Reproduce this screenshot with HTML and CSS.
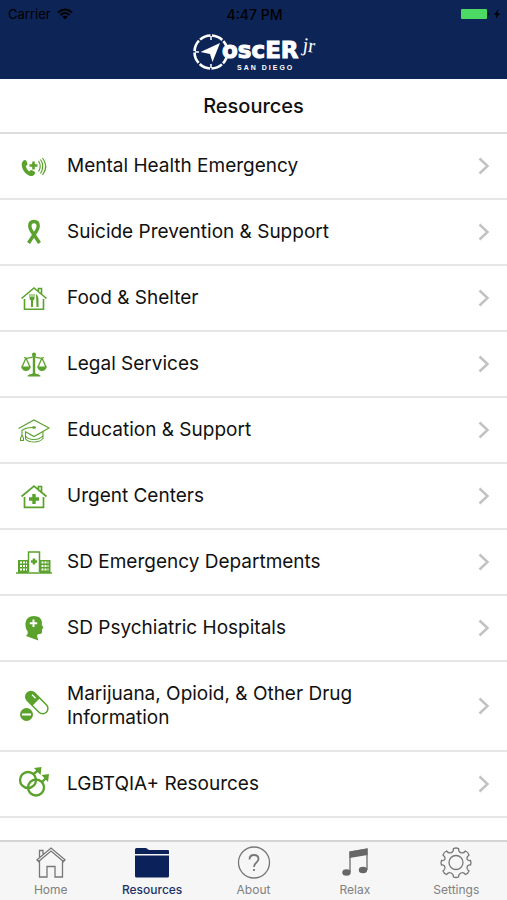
FILE: index.html
```html
<!DOCTYPE html>
<html lang="en">
<head>
  <meta charset="UTF-8">
  <meta name="viewport" content="width=device-width, initial-scale=1">
  <title>Resources</title>
  <link rel="stylesheet" href="styles.css">
</head>
<body>
  <header class="header">
    <div class="status">
      <div class="status-left">
        <span>Carrier</span>
        <svg width="16" height="12" viewBox="0 0 16 12" fill="none" stroke="#000" stroke-width="2">
          <path d="M1 4.500Q8-1.500 15 4.500M3.500 7Q8 3 12.500 7"/>
          <path d="M8 11.500L5.300 8.800Q8 6.800 10.700 8.800Z" fill="#000" stroke="none"/>
        </svg>
      </div>
      <span class="time">4:47 PM</span>
      <div class="status-right">
        <svg width="40" height="12" viewBox="0 0 40 12">
          <rect x="0" y="1" width="26" height="10" rx="1" fill="#4cd964"/>
          <path d="M27.500 4.300Q29.500 6 27.500 7.700Z"/>
          <path d="M37.500 1L33 6.700H35.700L34.700 11L39 5.200H36.300Z"/>
        </svg>
      </div>
    </div>
    <svg class="logo" width="128" height="40" viewBox="0 0 128 40" role="img" aria-label="oscER jr San Diego">
      <circle cx="21" cy="20" r="16.500" fill="none" stroke="#fff" stroke-width="2.600" stroke-dasharray="11.460 1.500" stroke-dashoffset="-1" pathLength="103.680"/>
      <path d="M21 4V8M21 32V36M5 20H9" stroke="#fff" stroke-width="1.500"/>
      <circle cx="39" cy="20" r="6" fill="#0d2456"/>
      <path d="M30 11L22.500 30L20 22L10.500 20Z" fill="#fff"/>
      <text x="32" y="26" class="logo-name">oscER</text>
      <text x="112" y="19" class="logo-jr" transform="rotate(8 112 19)">jr</text>
      <text x="47" y="38" class="logo-city">SAN DIEGO</text>
    </svg>
  </header>

  <h1>Resources</h1>

  <main>
    <ul class="list">
      <li><a href="#">
        <svg class="icon" viewBox="0 0 36 36">
          <path class="solid" d="M7.500 12.500Q9.500 11.500 10.500 13L11.500 16Q11.500 17 9.700 18.300Q10.500 21.500 13.200 23.500Q14.500 21.800 15.500 22L18.500 23.500Q19.700 24.500 18.500 26.500Q16.500 29 13 27.500Q8.500 25.500 6.500 20.500Q4.500 15 7.500 12.500Z"/>
          <path d="M17.500 13.500V21.500M13.500 17.500H21.500" stroke-width="2.600"/>
          <path d="M22.500 13Q26 18 22.500 23.500M24.500 11.500Q29 18 24.500 25.500M26.500 10Q33 18.500 26.500 27" stroke-width="1.200"/>
        </svg>
        <span>Mental Health Emergency</span>
        <svg class="arrow" viewBox="0 0 12 18"><path d="M1.500 1.500L9.500 9L1.500 16.500"/></svg>
      </a></li>
      <li><a href="#">
        <svg class="icon" viewBox="0 0 36 36">
          <path d="M13.800 12Q13.800 7.500 18 7.500Q22.200 7.500 22.200 12Q22.200 15 18.500 20L12.500 29M13.800 12Q13.800 15 17.500 20L23.500 29" stroke-width="3.400"/>
        </svg>
        <span>Suicide Prevention &amp; Support</span>
        <svg class="arrow" viewBox="0 0 12 18"><path d="M1.500 1.500L9.500 9L1.500 16.500"/></svg>
      </a></li>
      <li><a href="#">
        <svg class="icon" viewBox="0 0 36 36">
          <path d="M5.500 18.500L18 8L30.500 18.500M22.500 11V8.500H25.500V14M8.500 19V29.300H27.500V19" stroke-width="1.600"/>
          <path class="solid" d="M13.500 14H14.500V17H15.500V14H16.500V17H17.500V14H18.500V18Q18.500 20 17 20.500V27H15V20.500Q13.500 20 13.500 18ZM20 14Q22.500 15.500 22.500 20.500V27H20.500Z"/>
        </svg>
        <span>Food &amp; Shelter</span>
        <svg class="arrow" viewBox="0 0 12 18"><path d="M1.500 1.500L9.500 9L1.500 16.500"/></svg>
      </a></li>
      <li><a href="#">
        <svg class="icon" viewBox="0 0 36 36">
          <path d="M18 8V27" stroke-width="2.400"/>
          <circle class="solid" cx="18" cy="8.500" r="2"/>
          <path d="M8 11.500Q13 13 18 10.500Q23 13 28 11.500M10 12L6 21M10 12L14 21M26 12L22 21M26 12L30 21" stroke-width="1.300"/>
          <path class="solid" d="M5 20.500H15Q13.500 25 10 25Q6.500 25 5 20.500ZM21 20.500H31Q29.500 25 26 25Q22.500 25 21 20.500ZM11.500 30.500Q11.500 28.500 15.500 28L18 26.500L20.500 28Q24.500 28.500 24.500 30.500Z"/>
        </svg>
        <span>Legal Services</span>
        <svg class="arrow" viewBox="0 0 12 18"><path d="M1.500 1.500L9.500 9L1.500 16.500"/></svg>
      </a></li>
      <li><a href="#">
        <svg class="icon" viewBox="0 0 36 36">
          <path d="M2.500 16.500L18 8L33 16L18 24.500L9 19.500M18 15.500Q10 15 6 18.500V23M9.500 20V27Q12 30 18 30Q24 30 27 26.500V20M9.500 24Q12 27.500 18 27.500Q24 27.500 27 23.500M6 23Q4 26 4.500 28.500H7.500Q8 26 6 23" stroke-width="1.100"/>
          <ellipse class="solid" cx="18" cy="15.500" rx="2" ry="1.300"/>
        </svg>
        <span>Education &amp; Support</span>
        <svg class="arrow" viewBox="0 0 12 18"><path d="M1.500 1.500L9.500 9L1.500 16.500"/></svg>
      </a></li>
      <li><a href="#">
        <svg class="icon" viewBox="0 0 36 36">
          <path d="M5.500 18.500L18 8L30.500 18.500M22.500 11V8.500H25.500V14M8.500 19V29.300H27.500V19" stroke-width="1.700"/>
          <path d="M18 16V26M13 21H23" stroke-width="3.400"/>
        </svg>
        <span>Urgent Centers</span>
        <svg class="arrow" viewBox="0 0 12 18"><path d="M1.500 1.500L9.500 9L1.500 16.500"/></svg>
      </a></li>
      <li><a href="#">
        <svg class="icon" viewBox="0 0 36 36">
          <path d="M12.500 28V8H23.500V28" stroke-width="1.500"/>
          <path d="M0 29H36" stroke-width="1.300"/>
          <path class="solid" d="M2 16H12V29H2ZM24 16H34.500V29H24Z"/>
          <path d="M18 14.500V20.500M15 17.500H21" stroke-width="2.600"/>
          <path class="windows" d="M4 18.500H11M4 22H11M4 25.500H11M25.500 18.500H32.500M25.500 22H32.500M25.500 25.500H32.500"/>
        </svg>
        <span>SD Emergency Departments</span>
        <svg class="arrow" viewBox="0 0 12 18"><path d="M1.500 1.500L9.500 9L1.500 16.500"/></svg>
      </a></li>
      <li><a href="#">
        <svg class="icon" viewBox="0 0 36 36">
          <path class="solid" d="M18 6Q25 6 26 12L25.700 14.500L27.500 18L26 19V22Q26 24.500 22 24L21 26L22.500 30.500L10 26Q12.500 24 11.700 21.500Q9 18 9.500 13Q10.500 6 18 6Z"/>
          <path class="cross" d="M17.500 9.500V17M13.800 13.200H21.200"/>
        </svg>
        <span>SD Psychiatric Hospitals</span>
        <svg class="arrow" viewBox="0 0 12 18"><path d="M1.500 1.500L9.500 9L1.500 16.500"/></svg>
      </a></li>
      <li><a href="#">
        <svg class="icon" viewBox="0 0 36 36">
          <g transform="rotate(45 21 14.500)">
            <rect x="7.500" y="9.500" width="27" height="10.500" rx="5.250" stroke-width="1.500"/>
            <path class="solid" d="M20 9.500H12.700A5.250 5.250 0 0 0 12.700 20H20Z"/>
            <path d="M12 12.500H17" stroke="#fff" stroke-width="1.300"/>
          </g>
          <circle class="solid" cx="10.500" cy="26.500" r="6.500"/>
          <path d="M6 26.500H15" stroke="#fff" stroke-width="2"/>
        </svg>
        <span>Marijuana, Opioid, &amp; Other Drug Information</span>
        <svg class="arrow" viewBox="0 0 12 18"><path d="M1.500 1.500L9.500 9L1.500 16.500"/></svg>
      </a></li>
      <li><a href="#">
        <svg class="icon" viewBox="0 0 36 36">
          <circle cx="12" cy="14" r="8" stroke-width="2.300"/>
          <circle cx="20" cy="21.500" r="8" stroke-width="2.300"/>
          <path d="M17.500 8L22 4.500M26 16L30.500 11.500" stroke-width="2.400"/>
          <path class="solid" d="M18 2L25.500 1L24.500 9ZM25.500 9L33 8L32 16Z"/>
        </svg>
        <span>LGBTQIA+ Resources</span>
        <svg class="arrow" viewBox="0 0 12 18"><path d="M1.500 1.500L9.500 9L1.500 16.500"/></svg>
      </a></li>
    </ul>
  </main>

  <nav class="tabs">
    <a href="#">
      <svg width="34" height="34" viewBox="0 0 34 34">
        <path d="M4.500 15.500L3 13.800L17 2L31 13.800L29.500 15.500L17 5ZM5.500 11V4.500H9V8M5.500 15V31H13V20.500H21V31H28.500V15"/>
      </svg>
      <span>Home</span>
    </a>
    <a href="#" class="active">
      <svg width="36" height="34" viewBox="0 0 36 34">
        <path d="M1 8V3.500Q1 2 2.500 2H12L15 4H34Q35 4 35 5V8ZM1 9.500H35V30Q35 31.500 33.500 31.500H2.500Q1 31.500 1 30Z"/>
      </svg>
      <span>Resources</span>
    </a>
    <a href="#">
      <svg width="34" height="34" viewBox="0 0 34 34">
        <circle cx="17" cy="16.500" r="15.500"/>
        <path d="M12.500 13.500Q12.500 9 17 9Q21.500 9 21.500 13Q21.500 15 19 17Q17 18.500 17 21M17 23V25" stroke-width="1.800"/>
      </svg>
      <span>About</span>
    </a>
    <a href="#">
      <svg width="34" height="34" viewBox="0 0 34 34">
        <path d="M12 26V6L29 3V24" stroke-width="1.400"/>
        <path class="note" d="M11.500 5.500L29.500 2.500V9L11.500 12Z"/>
        <ellipse class="note" cx="8.500" cy="26.500" rx="4.200" ry="3.200"/>
        <ellipse class="note" cx="25" cy="24" rx="4.200" ry="3.200"/>
      </svg>
      <span>Relax</span>
    </a>
    <a href="#">
      <svg width="34" height="34" viewBox="0 0 34 34">
        <circle cx="17" cy="16.500" r="7"/>
        <path d="M14.500 2.500Q17 1.500 19.500 2.500Q19.500 6 22 6.800Q24.500 7.500 26.500 5Q29 6 30 9Q27.500 11 28 13Q29 15 31.500 14.500Q32.500 17 31.500 19Q28.500 18.500 28 21Q27.500 23 30 25Q29 27.500 26.500 28.500Q24.500 26 22 27Q19.500 28 19.500 31Q17 32 14.500 31Q14.500 28 12 27Q9.500 26 7.500 28.500Q5 27.500 4 25Q6.500 23 6 21Q5.500 18.500 2.500 19Q1.500 17 2.500 14.500Q5 15 6 13Q6.500 11 4 9Q5 6 7.500 5Q9.500 7.500 12 6.800Q14.500 6 14.500 2.500Z"/>
      </svg>
      <span>Settings</span>
    </a>
  </nav>
</body>
</html>
```

FILE: styles.css
```css
* {
  box-sizing: border-box;
}
body {
  margin: 0;
  height: 100vh;
  display: flex;
  flex-direction: column;
  background-color: #fff;
  font-family: Inter, "Liberation Sans", sans-serif;
  color: #111;
}
a {
  color: inherit;
  text-decoration: none;
}

.header {
  display: flex;
  flex-direction: column;
  align-items: center;
  height: 79px;
  background-color: #0d2456;
}
.status {
  display: grid;
  grid-template-columns: 1fr auto 1fr;
  align-items: center;
  width: 100%;
  height: 28px;
  padding: 0 6px 0 8px;
  font-size: 13px;
  color: #000;
}
.status-left {
  display: flex;
  align-items: center;
  gap: 6px;
}
.status-right {
  display: flex;
  justify-content: flex-end;
}
.time {
  font-size: 14px;
  font-weight: 500;
}
.logo {
  margin-top: 4px;
  fill: #fff;
}
.logo-name {
  font: bold 23px "DejaVu Sans", sans-serif;
  stroke: #fff;
  stroke-width: 1px;
}
.logo-jr {
  font: 20px "Liberation Serif", serif;
}
.logo-city {
  font: bold 7px "Liberation Sans", sans-serif;
  letter-spacing: 2px;
}

h1 {
  margin: 0;
  padding: 15px 0 13px;
  border-bottom: 2px solid #dcdcdc;
  font-size: 20px;
  font-weight: 500;
  line-height: 25px;
  text-align: center;
}

main {
  flex: 1;
  overflow: auto;
}
.list {
  margin: 0;
  padding: 0;
  list-style: none;
}
.list a {
  display: flex;
  align-items: center;
  gap: 15px;
  min-height: 66px;
  padding: 20px 17px 20px 16px;
  border-bottom: 2px solid #e6e6e6;
  font-size: 19px;
  line-height: 24px;
}
.list span {
  flex: 1;
  max-width: 310px;
}
.icon {
  width: 36px;
  height: 36px;
  margin: -6px 0;
  fill: none;
  stroke: #5aa22c;
}
.icon .solid {
  fill: #5aa22c;
  stroke: none;
}
.icon .windows {
  stroke: #fff;
  stroke-width: 2px;
  stroke-dasharray: 2 1;
}
.icon .cross {
  stroke: #fff;
  stroke-width: 2px;
}
.arrow {
  width: 12px;
  height: 18px;
  margin-left: auto;
  fill: none;
  stroke: #c2c2c4;
  stroke-width: 2.5px;
}

.tabs {
  display: flex;
  height: 60px;
  border-top: 2px solid #d4d4d4;
  background-color: #f6f6f6;
}
.tabs a {
  flex: 1;
  display: flex;
  flex-direction: column;
  align-items: center;
  padding-top: 4px;
  font-size: 12px;
  line-height: 20px;
  color: #808080;
}
.tabs svg {
  fill: none;
  stroke: #777;
  stroke-width: 1.3px;
}
.tabs .note {
  fill: #666;
  stroke: none;
}
.tabs .active {
  font-weight: 500;
  color: #1c3468;
}
.tabs .active svg {
  fill: #0a2259;
  stroke: none;
}
```
